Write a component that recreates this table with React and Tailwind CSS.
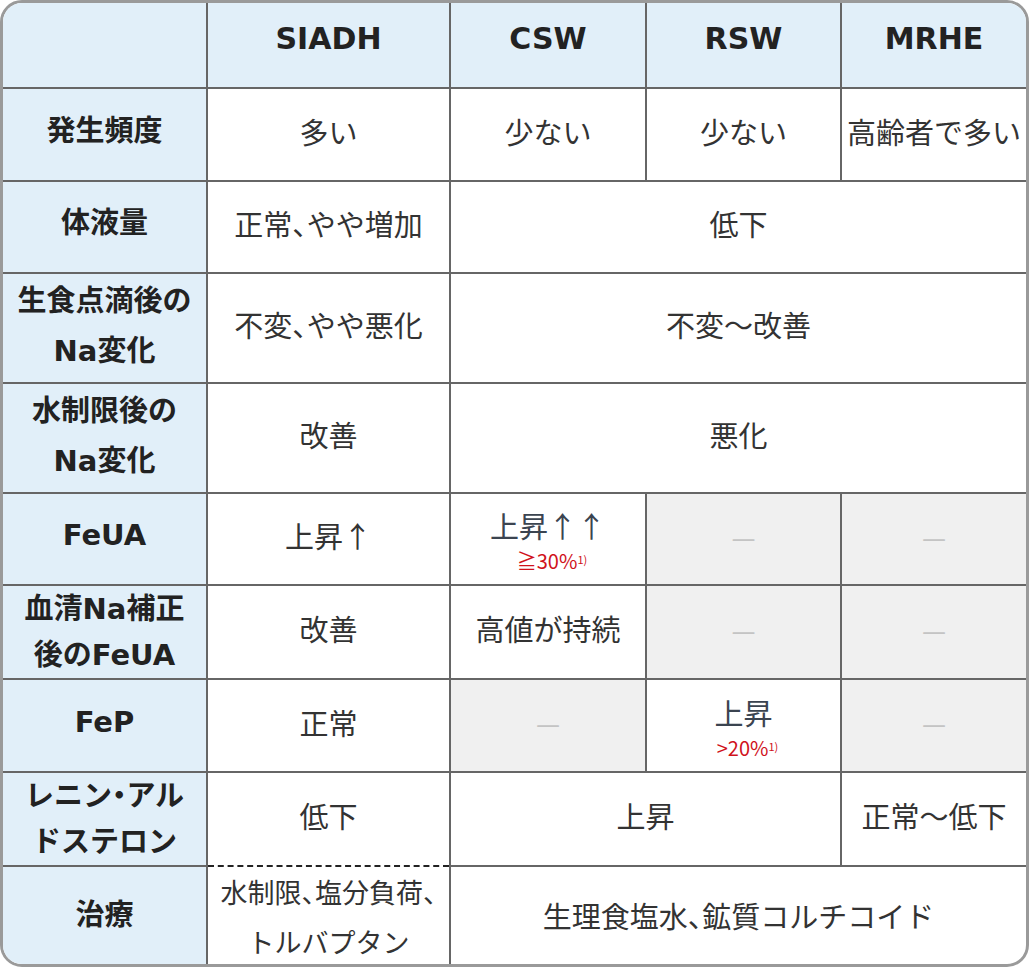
import React from "react";

// ─── Fonts & styles ───────────────────────────────────────────────────────────
const BODY_FONT = "font-['Noto_Sans_CJK_JP','Noto_Sans',sans-serif]";
const HEAD_FONT = "font-['DejaVu_Sans','Noto_Sans_CJK_JP',sans-serif]";

const base = "border-2 border-[#666] p-0 text-center align-middle";
const td = `${base} text-[29px] leading-[50px] text-[#333] ${BODY_FONT}`;
const th = `${base} bg-[#e1eff9] text-[29px] leading-[50px] font-bold text-[#222] ${HEAD_FONT}`;
const top = `${base} bg-[#e1eff9] text-[30px] leading-[50px] font-bold text-[#222] pb-3 ${HEAD_FONT}`;
const gray = `${base} bg-[#f0f0f0] pb-1`;

// half-width punctuation like the reference
function H({ children }) {
  return <span className="[font-feature-settings:'halt']">{children}</span>;
}

function Dash() {
  return <span className={`text-[27px] text-[#c4c4c4] ${BODY_FONT}`}>—</span>;
}

// value with a red footnote line under it
function WithNote({ value, note }) {
  return (
    <>
      <div className="text-[#3b4450] leading-[38px]">{value}</div>
      <div className={`text-[20px] leading-[34px] text-[#d0121b] ${BODY_FONT} pl-2`}>
        {note}
        <span className="relative -top-[5px] text-[11px] leading-none">1)</span>
      </div>
    </>
  );
}

export default function App() {
  return (
    <div className="w-[1029px] h-[969px] bg-white">
      <div className="w-[1029px] h-[967px] border-[3px] border-[#9a9a9a] rounded-[22px] overflow-hidden">
        <table className="w-full h-full table-fixed border-collapse border-hidden">
          <colgroup>
            <col className="w-[204px]" />
            <col className="w-[243px]" />
            <col className="w-[196px]" />
            <col className="w-[195px]" />
            <col />
          </colgroup>
          <tbody>
            <tr className="h-[85px]">
              <th className={top}></th>
              <th className={top}>SIADH</th>
              <th className={top}>CSW</th>
              <th className={top}>RSW</th>
              <th className={top}>MRHE</th>
            </tr>
            <tr className="h-[93px]">
              <th className={`${th} pb-2`}>発生頻度</th>
              <td className={`${td} pb-2`}>多い</td>
              <td className={`${td} pb-2`}>少ない</td>
              <td className={`${td} pb-2`}>少ない</td>
              <td className={`${td} pb-2 whitespace-nowrap`}>高齢者で多い</td>
            </tr>
            <tr className="h-[92px]">
              <th className={`${th} pb-2`}>体液量</th>
              <td className={`${td} pb-2`}>正常<H>、</H>やや増加</td>
              <td className={`${td} pb-2`} colSpan={3}>低下</td>
            </tr>
            <tr className="h-[110px]">
              <th className={`${th} pb-1`}>生食点滴後の<br />Na変化</th>
              <td className={`${td} pb-2`}>不変<H>、</H>やや悪化</td>
              <td className={`${td} pb-2`} colSpan={3}>不変～改善</td>
            </tr>
            <tr className="h-[110px]">
              <th className={`${th} pb-1`}>水制限後の<br />Na変化</th>
              <td className={`${td} pb-2`}>改善</td>
              <td className={`${td} pb-2`} colSpan={3}>悪化</td>
            </tr>
            <tr className="h-[92px]">
              <th className={`${th} pb-2`}>FeUA</th>
              <td className={`${td} pb-2`}>上昇↑</td>
              <td className={`${td} pt-[6px]`}>
                <WithNote value="上昇↑↑" note="≧30%" />
              </td>
              <td className={gray}><Dash /></td>
              <td className={gray}><Dash /></td>
            </tr>
            <tr className="h-[92px]">
              <th className={`${th} !leading-[46px]`}>血清Na補正<br />後のFeUA</th>
              <td className={`${td} pb-2`}>改善</td>
              <td className={`${td} pb-2`}>高値が持続</td>
              <td className={gray}><Dash /></td>
              <td className={gray}><Dash /></td>
            </tr>
            <tr className="h-[93px]">
              <th className={`${th} pb-2`}>FeP</th>
              <td className={`${td} pb-2`}>正常</td>
              <td className={gray}><Dash /></td>
              <td className={`${td} pt-[6px]`}>
                <WithNote value="上昇" note=">20%" />
              </td>
              <td className={gray}><Dash /></td>
            </tr>
            <tr className="h-[94px]">
              <th className={`${th} !leading-[46px] whitespace-nowrap`}>レニン<H>・</H>アル<br />ドステロン</th>
              <td className={`${td} pb-2 border-b-0`}>低下</td>
              <td className={`${td} pb-2`} colSpan={2}>上昇</td>
              <td className={`${td} pb-2 whitespace-nowrap`}>正常～低下</td>
            </tr>
            <tr>
              <th className={`${th} pb-2`}>治療</th>
              <td className={`${td} !text-[27px] pb-1 whitespace-nowrap [border-top-style:dashed] border-t-[#222]`}>
                水制限<H>、</H>塩分負荷<H>、</H><br />トルバプタン
              </td>
              <td className={`${td} pb-2 whitespace-nowrap`} colSpan={3}>生理食塩水<H>、</H>鉱質コルチコイド</td>
            </tr>
          </tbody>
        </table>
      </div>
    </div>
  );
}
